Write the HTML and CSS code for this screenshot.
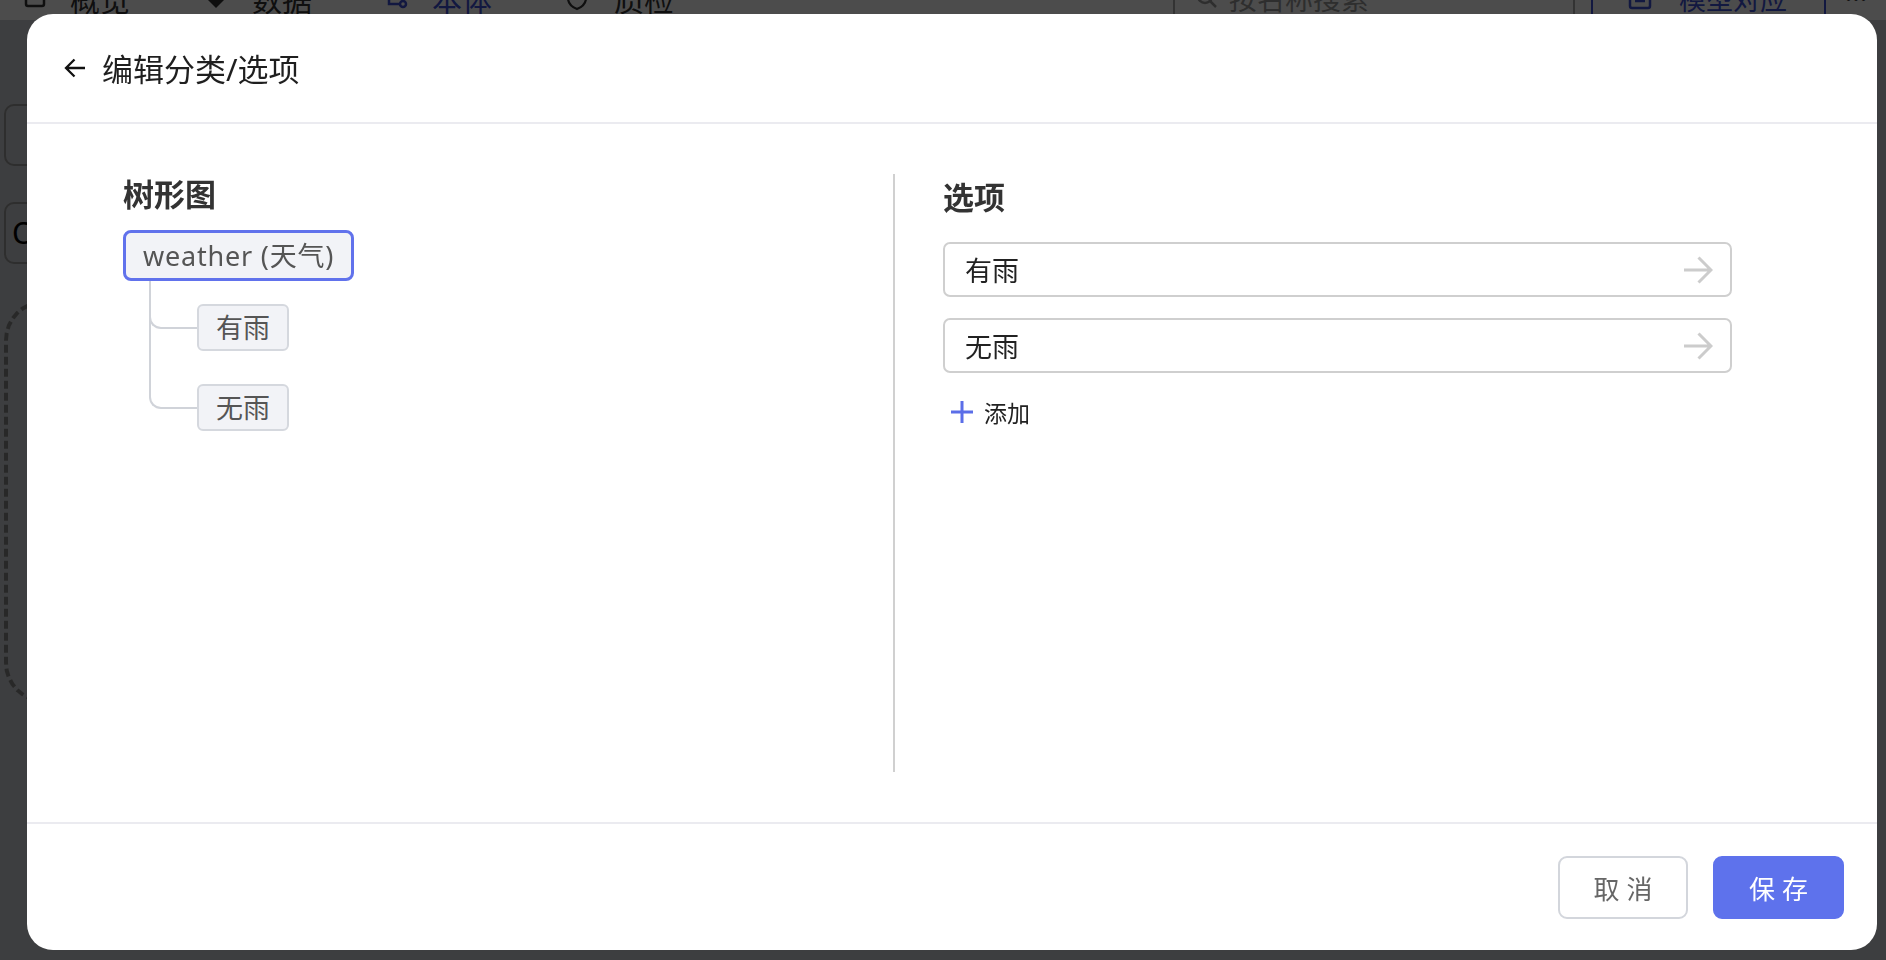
FILE: index.html
```html
<!DOCTYPE html>
<html lang="zh-CN">
<head>
    <meta charset="UTF-8">
    <meta name="viewport" content="width=device-width, initial-scale=1.0">
    <title>编辑分类/选项</title>
    <link rel="stylesheet" href="styles.css">
</head>
<body>

<div class="app">
    <header class="topnav">
        <nav class="nav-left">
            <span class="nav-item">
                <svg width="22" height="22" viewBox="0 0 22 22"><rect x="2" y="3" width="18" height="16" rx="2" fill="none" stroke="currentColor" stroke-width="2.5"/><path d="M2 9h18" stroke="currentColor" stroke-width="2.5"/></svg>
                概览
            </span>
            <span class="nav-item">
                <svg width="24" height="24" viewBox="0 0 24 24"><path d="M12 2l10 10-10 10L2 12z" fill="currentColor"/></svg>
                数据
            </span>
            <span class="nav-item active">
                <svg width="24" height="24" viewBox="0 0 24 24"><rect x="2" y="3" width="20" height="8" rx="2" fill="none" stroke="currentColor" stroke-width="2.5"/><circle cx="19" cy="18" r="3" fill="none" stroke="currentColor" stroke-width="2.5"/><path d="M5 11v7h11" fill="none" stroke="currentColor" stroke-width="2.5"/></svg>
                本体
            </span>
            <span class="nav-item">
                <svg width="26" height="26" viewBox="0 0 26 26"><path d="M13 2l9 4v7c0 5-4 9-9 11-5-2-9-6-9-11V6z" fill="none" stroke="currentColor" stroke-width="2.2"/></svg>
                质检
            </span>
        </nav>
        <div class="nav-right">
            <div class="search">
                <svg width="24" height="24" viewBox="0 0 24 24"><circle cx="10" cy="10" r="7" fill="none" stroke="currentColor" stroke-width="2.5"/><path d="M15 15l6 6" stroke="currentColor" stroke-width="2.5"/></svg>
                <span>按名称搜索</span>
            </div>
            <button class="map-btn">
                <svg width="26" height="26" viewBox="0 0 26 26"><rect x="3" y="3" width="20" height="20" rx="2" fill="none" stroke="currentColor" stroke-width="2.5"/><path d="M8 10h10M8 16h10" stroke="currentColor" stroke-width="2.5"/></svg>
                模型对应
            </button>
            <span class="more">···</span>
        </div>
    </header>
    <div class="app-body">
        <div class="field"></div>
        <div class="field field-text">O</div>
        <div class="dropzone"></div>
    </div>
</div>

<div class="mask"></div>

<div class="modal">
    <div class="modal-header">
        <svg class="back" width="22" height="22" viewBox="0 0 22 22"><path d="M21 11H2M10.5 2.5L2 11l8.5 8.5" fill="none" stroke="#111" stroke-width="2.3"/></svg>
        <span class="modal-title">编辑分类/选项</span>
    </div>

    <div class="modal-body">
        <div class="tree-panel">
            <h3 class="panel-title">树形图</h3>
            <div class="tree">
                <div class="tree-node root">weather (天气)</div>
                <div class="tree-children">
                    <div class="tree-item"><span class="tree-node">有雨</span></div>
                    <div class="tree-item"><span class="tree-node">无雨</span></div>
                </div>
            </div>
        </div>

        <div class="divider"></div>

        <div class="option-panel">
            <h3 class="panel-title">选项</h3>
            <div class="option-list">
                <div class="option">
                    <span>有雨</span>
                    <svg width="30" height="28" viewBox="0 0 30 28"><path d="M1 14H27M15.5 1.5L28 14 15.5 26.5" fill="none" stroke="#cccccc" stroke-width="3"/></svg>
                </div>
                <div class="option">
                    <span>无雨</span>
                    <svg width="30" height="28" viewBox="0 0 30 28"><path d="M1 14H27M15.5 1.5L28 14 15.5 26.5" fill="none" stroke="#cccccc" stroke-width="3"/></svg>
                </div>
            </div>
            <div class="add-option">
                <svg width="24" height="24" viewBox="0 0 24 24"><path d="M12 1v22M1 12h22" stroke="#5b6ee8" stroke-width="3"/></svg>
                <span>添加</span>
            </div>
        </div>
    </div>

    <div class="modal-footer">
        <button class="btn">取 消</button>
        <button class="btn btn-primary">保 存</button>
    </div>
</div>

</body>
</html>
```

FILE: styles.css
```css
body {
    margin: 0;
    background-color: #cdd0d5;
    font-family: "Noto Sans", "Noto Sans CJK SC", sans-serif;
    overflow: hidden;
    height: 100vh;
}

/* page behind the modal */
.topnav {
    display: flex;
    justify-content: space-between;
    align-items: center;
    height: 44px;
    margin-top: -24px;
    background-color: #fff;
    color: #333;
}

.nav-left {
    display: flex;
    align-items: center;
    padding-left: 24px;
}

.nav-item {
    display: flex;
    align-items: center;
    gap: 24px;
    width: 180px;
    font-size: 30px;
}

.nav-item.active {
    color: #3f51d8;
}

.nav-right {
    display: flex;
    align-items: center;
    height: 100%;
}

.search {
    display: flex;
    align-items: center;
    gap: 10px;
    width: 378px;
    height: 54px;
    padding-left: 20px;
    border-left: 2px solid #aaa;
    border-right: 2px solid #aaa;
    font-size: 28px;
    color: #999;
}

.map-btn {
    display: flex;
    align-items: center;
    gap: 26px;
    height: 54px;
    width: 235px;
    margin-left: 16px;
    padding-left: 34px;
    border: 2px solid #3f51d8;
    background: #fff;
    font-family: inherit;
    font-size: 27px;
    color: #3f51d8;
}

.more {
    width: 60px;
    text-align: center;
    font-size: 28px;
}

.app-body {
    padding: 84px 0 0 4px;
}

.field {
    height: 58px;
    width: 200px;
    border: 2px solid #999;
    border-radius: 10px;
    margin-bottom: 36px;
}

.field-text {
    font-size: 30px;
    line-height: 58px;
    padding-left: 6px;
    color: #000;
}

.dropzone {
    height: 395px;
    width: 200px;
    border: 4px dashed #888;
    border-radius: 40px;
    margin-top: 18px;
}

.mask {
    position: fixed;
    inset: 0;
    background-color: rgba(0, 0, 0, 0.7);
}

/* modal */
.modal {
    position: fixed;
    left: 27px;
    top: 14px;
    width: 1850px;
    height: 936px;
    background-color: #fff;
    border-radius: 26px;
    display: flex;
    flex-direction: column;
    overflow: hidden;
}

.modal-header {
    display: flex;
    align-items: center;
    gap: 16px;
    height: 108px;
    padding-left: 37px;
    border-bottom: 2px solid #ebebf0;
    flex-shrink: 0;
}

.modal-title {
    font-size: 31px;
    color: #1f1f1f;
    margin-top: -2px;
}

.modal-body {
    flex: 1;
    display: flex;
    padding: 50px 145px 50px 96px;
}

.tree-panel {
    flex: 1;
}

.divider {
    width: 2px;
    background-color: #d0d0d0;
}

.option-panel {
    width: 789px;
    padding-left: 48px;
    padding-top: 3px;
}

.panel-title {
    margin: 0;
    font-size: 31px;
    line-height: 40px;
    font-weight: 700;
    color: #333;
}

/* tree */
.tree {
    margin-top: 16px;
}

.tree-node {
    display: inline-block;
    font-size: 27px;
    line-height: 43px;
    padding: 0 17px;
    color: #555;
    background-color: #f2f3f7;
    border: 2px solid #d5d8de;
    border-radius: 6px;
}

.tree-node.root {
    line-height: 45px;
    letter-spacing: 0.8px;
    border: 3px solid #6172ec;
    border-radius: 8px;
}

.tree-children {
    display: flex;
    flex-direction: column;
    align-items: flex-start;
    margin-left: 26px;
}

.tree-item {
    position: relative;
    padding-left: 48px;
    margin-top: 33px;
}

.tree-item:first-child {
    margin-top: 23px;
}

.tree-item::before {
    content: '';
    position: absolute;
    left: 0;
    top: -33px;
    width: 48px;
    height: calc(50% + 34px);
    box-sizing: border-box;
    border-left: 2px solid #d0d3d9;
    border-bottom: 2px solid #d0d3d9;
    border-bottom-left-radius: 12px;
}

.tree-item:first-child::before {
    top: -23px;
    height: calc(50% + 24px);
}

.tree-item:not(:last-child)::after {
    content: '';
    position: absolute;
    left: 0;
    top: 0;
    bottom: -33px;
    border-left: 2px solid #d0d3d9;
}

.tree-item .tree-node {
    display: block;
}

/* options */
.option-list {
    display: flex;
    flex-direction: column;
    gap: 21px;
    margin-top: 25px;
}

.option {
    display: flex;
    align-items: center;
    justify-content: space-between;
    height: 51px;
    padding: 0 17px 0 20px;
    border: 2px solid #cfcfcf;
    border-radius: 7px;
    font-size: 27px;
    color: #222;
}

.add-option {
    display: flex;
    align-items: center;
    gap: 10px;
    margin-top: 19px;
    margin-left: 7px;
    height: 40px;
    font-size: 23px;
    color: #222;
}

/* footer */
.modal-footer {
    display: flex;
    justify-content: flex-end;
    align-items: center;
    gap: 25px;
    height: 126px;
    padding-right: 33px;
    border-top: 2px solid #ebebf0;
    flex-shrink: 0;
}

.btn {
    width: 130px;
    height: 63px;
    font-family: "Liberation Sans", "Noto Sans CJK SC", sans-serif;
    font-size: 26px;
    color: #666;
    background-color: #fff;
    border: 2px solid #d3d6dc;
    border-radius: 9px;
    cursor: pointer;
}

.btn-primary {
    width: 131px;
    color: #fff;
    background-color: #5e72ec;
    border-color: #5e72ec;
}
```
